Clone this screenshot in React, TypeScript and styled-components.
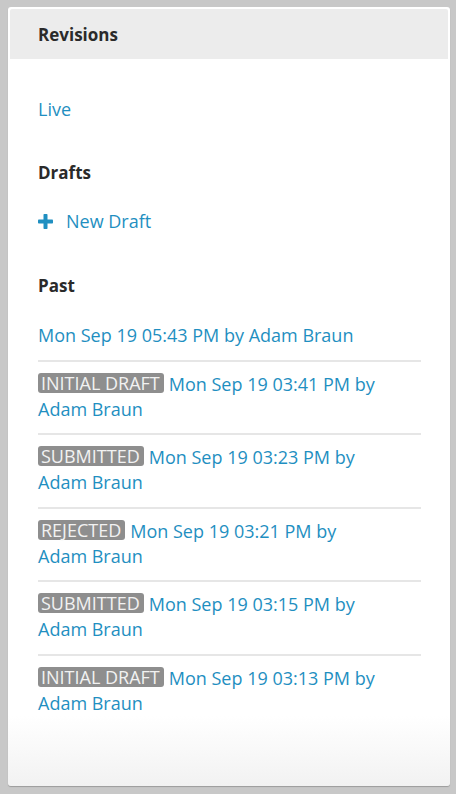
import React from "react";
import styled, { createGlobalStyle } from "styled-components";

const Global = createGlobalStyle`
  html, body { margin: 0; padding: 0; }
  body {
    background: #c8c8c8;
    font-family: "Open Sans", "Liberation Sans", sans-serif;
  }
  * { box-sizing: border-box; }
`;

const Page = styled.div`
  padding: 7px 6px 8px 8px;
  height: 794px;
`;

const Panel = styled.div`
  height: 779px;
  padding: 2px;
  border-radius: 3px;
  background: linear-gradient(to bottom, #ffffff 0%, #ffffff 91%, #f2f2f2 100%);
  box-shadow: 0 1px 1px rgba(0, 0, 0, 0.22);
  display: flex;
  flex-direction: column;
`;

const Header = styled.div`
  height: 50px;
  background: #ececec;
  border-radius: 2px 2px 0 0;
  display: flex;
  align-items: center;
  padding-left: 28px;
  font-size: 17px;
  font-weight: 700;
  color: #2a2a2a;
`;

const Body = styled.div`
  padding: 38px 27px 0 28px;
  display: flex;
  flex-direction: column;
  font-size: 18px;
  line-height: 25px;
`;

const Link = styled.a`
  color: #1f8fc1;
  text-decoration: none;
  cursor: pointer;
`;

const Author = styled.span`
  white-space: nowrap;
`;

const Heading = styled.div<{ $top: number; $bottom: number }>`
  font-size: 17px;
  font-weight: 700;
  color: #2a2a2a;
  margin-top: ${(p) => p.$top}px;
  margin-bottom: ${(p) => p.$bottom}px;
  line-height: 25px;
`;

const AddRow = styled.div`
  display: flex;
  align-items: center;
  gap: 13px;
  color: #1f8fc1;
`;

const List = styled.ul`
  list-style: none;
  margin: 0;
  padding: 0;
`;

const Item = styled.li`
  padding: 10px 0 11.5px;
  border-top: 2px solid #e6e6e6;
  &:first-child {
    border-top: none;
  }
`;

const Badge = styled.span`
  display: inline-block;
  background: #8e8e8e;
  color: #f2f2f2;
  border-radius: 3px;
  padding: 0 4px 0 3px;
  line-height: 20px;
  margin-right: 5px;
  vertical-align: 1px;
`;

const PlusIcon = () => (
  <svg width="15" height="15" viewBox="0 0 15 15" aria-hidden="true">
    <rect x="5.5" y="0" width="4" height="15" rx="0.8" fill="#1f8fc1" />
    <rect x="0" y="5.5" width="15" height="4" rx="0.8" fill="#1f8fc1" />
  </svg>
);

type Rev = { badge?: string; time: string };

const revisions: Rev[] = [
  { time: "Mon Sep 19 05:43 PM" },
  { badge: "INITIAL DRAFT", time: "Mon Sep 19 03:41 PM" },
  { badge: "SUBMITTED", time: "Mon Sep 19 03:23 PM" },
  { badge: "REJECTED", time: "Mon Sep 19 03:21 PM" },
  { badge: "SUBMITTED", time: "Mon Sep 19 03:15 PM" },
  { badge: "INITIAL DRAFT", time: "Mon Sep 19 03:13 PM" },
];

export default function App() {
  return (
    <>
      <Global />
      <Page>
        <Panel>
          <Header>Revisions</Header>
          <Body>
            <Link>Live</Link>
            <Heading $top={38} $bottom={24}>Drafts</Heading>
            <AddRow>
              <PlusIcon />
              <Link>New Draft</Link>
            </AddRow>
            <Heading $top={39} $bottom={15}>Past</Heading>
            <List>
              {revisions.map((r, i) => (
                <Item key={i}>
                  {r.badge && <Badge>{r.badge}</Badge>}
                  <Link>
                    {r.time} by <Author>Adam Braun</Author>
                  </Link>
                </Item>
              ))}
            </List>
          </Body>
        </Panel>
      </Page>
    </>
  );
}
